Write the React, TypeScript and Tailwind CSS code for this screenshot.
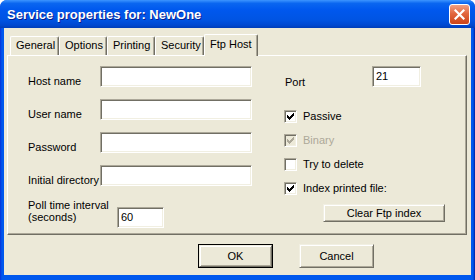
import React from "react";

const sunken =
  "border border-t-[#ACA899] border-l-[#ACA899] border-r-white border-b-white shadow-[inset_1px_1px_0_#716F64,inset_-1px_-1px_0_#F1EFE2]";
const raised =
  "border border-t-[#F1EFE2] border-l-[#F1EFE2] border-r-[#716F64] border-b-[#716F64] shadow-[inset_1px_1px_0_#FFFFFF,inset_-1px_-1px_0_#ACA899]";

function Check({ color }: { color: string }) {
  const cols = [2, 3, 4, 3, 2, 1, 0];
  return (
    <svg width="7" height="7" viewBox="0 0 7 7" shapeRendering="crispEdges">
      {cols.map((y, x) => (
        <rect key={x} x={x} y={y} width="1" height="3" fill={color} />
      ))}
    </svg>
  );
}

function CheckBox({
  checked,
  disabled,
  label,
}: {
  checked: boolean;
  disabled?: boolean;
  label: string;
}) {
  return (
    <div className="flex items-center h-[13px]">
      <div
        className={`w-[13px] h-[13px] flex items-center justify-center ${sunken} ${
          disabled ? "bg-[#ECE9D8]" : "bg-white"
        }`}
      >
        {checked && <Check color={disabled ? "#ACA899" : "#000000"} />}
      </div>
      <span
        className={`ml-[6px] leading-[13px] ${
          disabled ? "text-[#ACA899]" : "text-black"
        }`}
      >
        {label}
      </span>
    </div>
  );
}

function Field({ w, value = "" }: { w: string; value?: string }) {
  return (
    <div className={`${w} h-[21px] bg-white ${sunken} pl-[3px] pt-[3px] leading-[13px]`}>
      {value}
    </div>
  );
}

function Tab({ label, w, active }: { label: string; w: string; active?: boolean }) {
  return (
    <div
      className={`${w} ${
        active ? "h-[22px] relative z-10 -mb-px pt-[3px]" : "h-[19px] pt-[2px]"
      } bg-[#ECE9D8] border-l border-t border-l-white border-t-white border-r border-r-[#716F64] shadow-[inset_-1px_0_0_#ACA899] rounded-tl-[2px] rounded-tr-[2px] pl-[5px] leading-[13px] whitespace-nowrap`}
    >
      {label}
    </div>
  );
}

export default function App() {
  return (
    <div
      className="w-[475px] h-[280px] flex flex-col rounded-t-[7px] overflow-hidden bg-[linear-gradient(90deg,#0831D9_0px,#0058EE_2px,#0058EE_473px,#001EA0_475px)] text-[11px]"
      style={{ fontFamily: '"Liberation Sans", Arial, sans-serif' }}
    >
      {/* Title bar */}
      <div className="h-[28px] flex items-center pl-[7px] pr-[5px] bg-[linear-gradient(180deg,#3D95FF_0%,#0A66F0_12%,#0058EE_35%,#0054E3_70%,#0048D0_90%,#003DB8_100%)]">
        <span className="text-white font-bold text-[13px] [text-shadow:1px_1px_0_#0A1E8C] mt-[1px]">
          Service properties for: NewOne
        </span>
        <div className="ml-auto w-[21px] h-[21px] rounded-[3px] border border-white bg-[linear-gradient(180deg,#F0A084_0%,#E2663E_45%,#CC4418_100%)] flex items-center justify-center">
          <svg width="11" height="11" viewBox="0 0 11 11">
            <path
              d="M1.5 1.5 L9.5 9.5 M9.5 1.5 L1.5 9.5"
              stroke="white"
              strokeWidth="2.2"
              strokeLinecap="square"
            />
          </svg>
        </div>
      </div>

      {/* Body */}
      <div className="flex-1 mx-[4px] mb-[5px] bg-[#ECE9D8] flex flex-col pl-[3px] pt-[5px] text-black">
        {/* Tabs */}
        <div className="flex items-end h-[22px] pl-[3px]">
          <Tab label="General" w="w-[49px]" />
          <Tab label="Options" w="w-[48px]" />
          <Tab label="Printing" w="w-[48px]" />
          <Tab label="Security" w="w-[49px]" />
          <Tab label="Ftp Host" w="w-[54px]" active />
        </div>

        {/* Panel */}
        <div className="w-[460px] h-[180px] border border-t-white border-l-white border-r-[#716F64] border-b-[#716F64] shadow-[inset_-1px_-1px_0_#ACA899] pl-[20px] pt-[10px] flex">
          {/* Left column */}
          <div className="w-[224px] flex flex-col">
            {["Host name", "User name", "Password", "Initial directory"].map((l, i) => (
              <div key={l} className={`flex items-start ${i > 0 ? "mt-[11px]" : ""}`}>
                <span className="w-[72px] mt-[9px] leading-[13px] whitespace-nowrap">{l}</span>
                <Field w="w-[152px]" />
              </div>
            ))}
            <div className="flex items-start mt-[12px]">
              <span className="w-[89px] leading-[12px]">
                Poll time interval
                <br />
                (seconds)
              </span>
              <div className="mt-[8px]">
                <Field w="w-[47px]" value="60" />
              </div>
            </div>
          </div>

          {/* Right column */}
          <div className="ml-[32px] flex flex-col">
            <div className="flex items-start">
              <span className="w-[88px] mt-[10px] pl-px leading-[13px]">Port</span>
              <Field w="w-[49px]" value="21" />
            </div>
            <div className="mt-[21px] flex flex-col gap-[11px]">
              <CheckBox checked label="Passive" />
              <CheckBox checked disabled label="Binary" />
              <CheckBox checked={false} label="Try to delete" />
              <CheckBox checked label="Index printed file:" />
            </div>
            <div
              className={`mt-[9px] ml-[39px] w-[122px] h-[18px] ${raised} flex items-center justify-center leading-[13px]`}
            >
              Clear Ftp index
            </div>
          </div>
        </div>

        {/* Buttons */}
        <div className="flex mt-[9px] pl-[191px] gap-[26px]">
          <div className="w-[75px] h-[24px] border border-black">
            <div className={`w-full h-full ${raised} flex items-center justify-center leading-[13px]`}>
              OK
            </div>
          </div>
          <div className={`w-[75px] h-[24px] ${raised} flex items-center justify-center leading-[13px]`}>
            Cancel
          </div>
        </div>
      </div>
    </div>
  );
}
